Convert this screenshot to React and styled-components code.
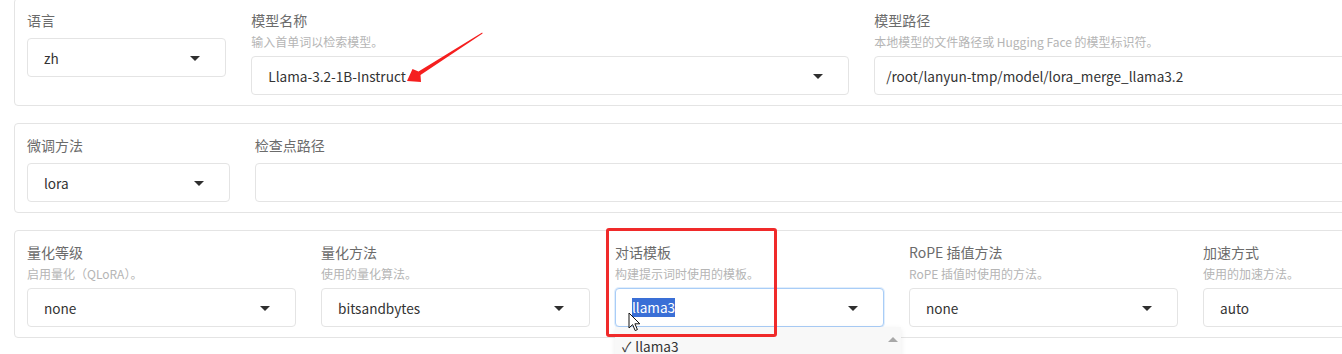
import React from "react";
import styled, { createGlobalStyle } from "styled-components";

const GlobalStyle = createGlobalStyle`
  html { overflow: hidden; background: #ffffff; }
  body { margin: 0; padding: 0; background: #ffffff; min-height: 100vh; font-family: "Noto Sans CJK SC", "Noto Sans", sans-serif; }
  * { box-sizing: border-box; }
`;

const Page = styled.div`
  position: relative;
  width: 1471px;
  margin: -2px 0 0 14px;
  display: flex;
  flex-direction: column;
  gap: 17px;
`;

const Panel = styled.div`
  border: 1px solid #e4e4e4;
  border-radius: 4px;
  background: #fff;
  padding: 11px 12px 10px;
  display: grid;
  grid-template-columns: ${(p) => p.$cols};
  column-gap: 25px;
  align-items: start;
`;

const Field = styled.div`
  position: relative;
  display: flex;
  flex-direction: column;
  min-width: 0;
`;

const Label = styled.span`
  font-size: 14px;
  line-height: 20px;
  color: #6b6b6b;
  margin-bottom: ${(p) => (p.$withInfo ? 4 : 8)}px;
  white-space: nowrap;
`;

const Info = styled.span`
  font-size: 12px;
  line-height: 16px;
  color: #b5b5b5;
  margin-bottom: 6px;
  white-space: nowrap;
`;

const Box = styled.div`
  position: relative;
  height: 39px;
  border: 1px solid ${(p) => (p.$focused ? "#a9cdf7" : "#e4e4e4")};
  box-shadow: ${(p) => (p.$focused ? "0 0 0 1px rgba(169,205,247,0.35)" : "none")};
  border-radius: 4px;
  background: #fff;
  display: flex;
  align-items: center;
  padding: 0 ${(p) => (p.$text ? 11 : 16)}px;
  font-size: 13.6px;
  color: #333333;
  white-space: nowrap;
`;

const Caret = styled.span`
  position: absolute;
  right: 25px;
  top: 50%;
  margin-top: -2px;
  width: 0;
  height: 0;
  border-left: 5px solid transparent;
  border-right: 5px solid transparent;
  border-top: 5px solid #2f2f2f;
`;

const Selected = styled.span`
  background: #3a6fd6;
  color: #ffffff;
  line-height: 19px;
`;

const Cursor = styled.svg`
  position: absolute;
  left: 12px;
  top: 23px;
  z-index: 3;
`;

const Dropdown = styled.div`
  position: absolute;
  top: 100%;
  left: 0;
  width: 286px;
  height: 34px;
  background: #f8f8f8;
  box-shadow: 0 2px 6px rgba(0, 0, 0, 0.08);
  z-index: 2;
`;

const Option = styled.div`
  padding: 9px 0 0 7px;
  font-size: 13.6px;
  line-height: 20px;
  color: #333;
  display: flex;
  gap: 4px;
`;

const ScrollUp = styled.span`
  position: absolute;
  right: 3px;
  top: 10px;
  width: 0;
  height: 0;
  border-left: 5px solid transparent;
  border-right: 5px solid transparent;
  border-bottom: 5px solid #a8a8a8;
`;

const Highlight = styled.div`
  position: absolute;
  left: -9px;
  top: -14px;
  width: 171px;
  height: 109px;
  border: 3px solid #f02a2a;
  border-radius: 3px;
  z-index: 4;
  pointer-events: none;
`;

const Arrow = styled.svg`
  position: absolute;
  left: 386px;
  top: 28px;
  z-index: 5;
`;

function Select({ value, caret = true, text = false, focused = false, children }) {
  return (
    <Box $text={text} $focused={focused}>
      {children || value}
      {caret && <Caret />}
    </Box>
  );
}

function FormField({ label, info, children }) {
  return (
    <Field>
      <Label $withInfo={!!info}>{label}</Label>
      {info && <Info>{info}</Info>}
      {children}
    </Field>
  );
}

export default function App() {
  return (
    <>
      <GlobalStyle />
      <Page>
        <Panel $cols="1fr 3fr 3fr">
          <FormField label="语言">
            <Select value="zh" />
          </FormField>
          <FormField label="模型名称" info="输入首单词以检索模型。">
            <Select value="Llama-3.2-1B-Instruct" />
          </FormField>
          <FormField label="模型路径" info="本地模型的文件路径或 Hugging Face 的模型标识符。">
            <Select value="/root/lanyun-tmp/model/lora_merge_llama3.2" text caret={false} />
          </FormField>
        </Panel>

        <Panel $cols="1fr 6fr">
          <FormField label="微调方法">
            <Select value="lora" />
          </FormField>
          <FormField label="检查点路径">
            <Select value="" caret={false} />
          </FormField>
        </Panel>

        <Panel $cols="repeat(5, 1fr)">
          <FormField label="量化等级" info="启用量化（QLoRA）。">
            <Select value="none" />
          </FormField>
          <FormField label="量化方法" info="使用的量化算法。">
            <Select value="bitsandbytes" />
          </FormField>
          <Field>
            <Label $withInfo>对话模板</Label>
            <Info>构建提示词时使用的模板。</Info>
            <Select focused>
              <Selected>llama3</Selected>
              <Cursor width="13" height="20" viewBox="0 0 13 20">
                <path
                  d="M1 1 L1 16 L4.6 12.6 L7.2 18.6 L9.4 17.6 L6.9 11.8 L11.8 11.8 Z"
                  fill="#ffffff"
                  stroke="#111111"
                  strokeWidth="1"
                  strokeLinejoin="round"
                />
              </Cursor>
            </Select>
            <Dropdown>
              <Option>
                <span>✓</span>
                <span>llama3</span>
              </Option>
              <ScrollUp />
            </Dropdown>
            <Highlight />
          </Field>
          <FormField label="RoPE 插值方法" info="RoPE 插值时使用的方法。">
            <Select value="none" />
          </FormField>
          <FormField label="加速方式" info="使用的加速方法。">
            <Select value="auto" />
          </FormField>
        </Panel>

        <Arrow width="90" height="62" viewBox="0 0 90 62">
          <polygon
            points="82.2,6.6 18.5,45.5 12.5,43 7,55 21,56 20.5,49 82.6,7.4"
            fill="#f51f1f"
          />
        </Arrow>
      </Page>
    </>
  );
}
